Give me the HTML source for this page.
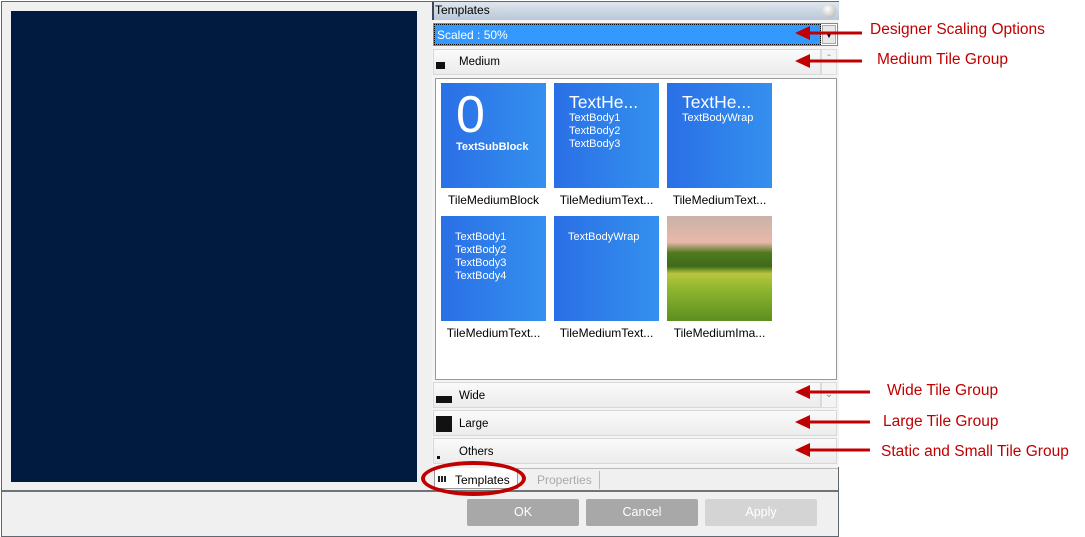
<!DOCTYPE html>
<html><head><meta charset="utf-8"><style>
*{margin:0;padding:0;box-sizing:border-box}
body{width:1085px;height:537px;background:#fff;position:relative;overflow:hidden;font-family:"Liberation Sans",sans-serif;font-size:12px;color:#000}
.a{position:absolute}
.tile{position:absolute;width:105px;height:105px;background:linear-gradient(90deg,#2a6fe6,#3490ee);color:#fff}
.lbl{position:absolute;width:113px;text-align:center;font-size:12px}
.hdr{position:absolute;left:433px;width:404px;background:linear-gradient(#fafafa,#ececec);border:1px solid #d8d8d8}
.hdr span{position:absolute;left:25px;font-size:11.5px}
.ann{position:absolute;color:#c00000;font-size:15.5px}
.btn{position:absolute;top:499px;width:112px;height:27px;background:#a8a8a8;color:#fff;text-align:center;line-height:27px;font-size:12.5px;border-radius:2px}
</style></head><body>
<div class="a" style="left:1px;top:1px;width:838px;height:536px;background:#f0f0f0;border:1px solid #606870"></div>
<div class="a" style="left:11px;top:11px;width:406px;height:471px;background:#001a40"></div>
<div class="a" style="left:2px;top:490px;width:836px;height:2px;background:#707478"></div>
<div class="a" style="left:432px;top:2px;width:407px;height:465px;background:#f4f4f4"></div>
<div class="a" style="left:432px;top:2px;width:407px;height:18px;background:linear-gradient(#dfe6ee,#b9c7d8);border-left:2px solid #445"></div>
<div class="a" style="left:435px;top:3px;font-size:12px">Templates</div>
<div class="a" style="left:822px;top:4px;width:14px;height:14px;border-radius:50%;background:radial-gradient(circle at 40% 35%,#fff,#aaa)"></div>
<div class="a" style="left:433px;top:23px;width:405px;height:23px;border:1px solid #888;background:#fff"></div>
<div class="a" style="left:434px;top:24px;width:387px;height:21px;background:#3399ff;border:1px dotted #000"></div>
<div class="a" style="left:437px;top:28px;color:#fff;font-size:12px">Scaled : 50%</div>
<div class="a" style="left:822px;top:25px;width:14px;height:19px;background:#e8e8e8;border:1px solid #aaa;font-size:8px;text-align:center;line-height:19px">▼</div>
<div class="hdr" style="top:49px;height:26px;width:388px"><span style="top:6px">Medium</span></div>
<div class="a" style="left:436px;top:62px;width:9px;height:7px;background:#111"></div>
<div class="a" style="left:821px;top:49px;width:16px;height:26px;background:#f4f4f4;border:1px solid #ddd;color:#888;font-size:10px;text-align:center;line-height:20px">ˆ</div>
<div class="a" style="left:435px;top:78px;width:402px;height:302px;background:#fff;border:1px solid #999"></div>
<div class="tile" style="left:441px;top:83px"><div class="a" style="left:15px;top:2px;font-size:52px;line-height:60px">0</div><div class="a" style="left:15px;top:58px;font-size:11px;font-weight:bold">TextSubBlock</div></div>
<div class="tile" style="left:554px;top:83px"><div class="a" style="left:15px;top:9px;font-size:17.5px">TextHe...</div><div class="a" style="left:15px;top:29px;font-size:11px;line-height:13px">TextBody1<br>TextBody2<br>TextBody3</div></div>
<div class="tile" style="left:667px;top:83px"><div class="a" style="left:15px;top:9px;font-size:17.5px">TextHe...</div><div class="a" style="left:15px;top:29px;font-size:11px">TextBodyWrap</div></div>
<div class="lbl" style="left:437px;top:193px">TileMediumBlock</div>
<div class="lbl" style="left:550px;top:193px">TileMediumText...</div>
<div class="lbl" style="left:663px;top:193px">TileMediumText...</div>
<div class="tile" style="left:441px;top:216px"><div class="a" style="left:14px;top:15px;font-size:11px;line-height:13px">TextBody1<br>TextBody2<br>TextBody3<br>TextBody4</div></div>
<div class="tile" style="left:554px;top:216px"><div class="a" style="left:14px;top:15px;font-size:11px">TextBodyWrap</div></div>
<div class="a" style="left:667px;top:216px;width:105px;height:105px;background:linear-gradient(#c9b3a8 0%,#e8b8a8 25%,#4f7a1f 35%,#3e6b1a 48%,#b8c640 55%,#8db52e 70%,#5d8f1f 100%)"></div>
<div class="lbl" style="left:437px;top:326px">TileMediumText...</div>
<div class="lbl" style="left:550px;top:326px">TileMediumText...</div>
<div class="lbl" style="left:663px;top:326px">TileMediumIma...</div>
<div class="hdr" style="top:382px;height:26px;width:388px"><span style="top:7px">Wide</span></div>
<div class="a" style="left:821px;top:382px;width:16px;height:26px;background:#f4f4f4;border:1px solid #ddd;color:#888;font-size:10px;text-align:center;line-height:24px">⌄</div>
<div class="a" style="left:436px;top:396px;width:16px;height:7px;background:#111"></div>
<div class="hdr" style="top:410px;height:26px"><span style="top:7px">Large</span></div>
<div class="a" style="left:436px;top:416px;width:16px;height:16px;background:#111"></div>
<div class="hdr" style="top:438px;height:26px"><span style="top:7px">Others</span></div>
<div class="a" style="left:437px;top:456px;width:3px;height:3px;background:#111"></div>
<div class="a" style="left:432px;top:468px;width:406px;height:1px;background:#bbb"></div>
<div class="a" style="left:434px;top:468px;width:84px;height:21px;background:#fff;border:1px solid #999;border-top:none"></div>
<div class="a" style="left:438px;top:476px;width:9px;height:6px;background:repeating-linear-gradient(90deg,#222 0 2px,transparent 2px 3px)"></div>
<div class="a" style="left:455px;top:473px;font-size:12px">Templates</div>
<div class="a" style="left:537px;top:473px;font-size:12px;color:#aaa">Properties</div>
<div class="a" style="left:599px;top:471px;width:1px;height:18px;background:#bbb"></div>
<div class="a" style="left:421px;top:461px;width:105px;height:35px;border:4px solid #c00000;border-radius:50%"></div>
<div class="btn" style="left:467px">OK</div>
<div class="btn" style="left:586px">Cancel</div>
<div class="btn" style="left:705px;background:#d4d4d4">Apply</div>
<svg class="a" style="left:790px;top:0" width="80" height="470">
<g stroke="#c00000" stroke-width="3" fill="#c00000">
<line x1="15" y1="33" x2="72" y2="33"/><polygon points="5,33 20,26 20,40" stroke="none"/>
<line x1="15" y1="61" x2="72" y2="61"/><polygon points="5,61 20,54 20,68" stroke="none"/>
<line x1="15" y1="392" x2="80" y2="392"/><polygon points="5,392 20,385 20,399" stroke="none"/>
<line x1="15" y1="422" x2="80" y2="422"/><polygon points="5,422 20,415 20,429" stroke="none"/>
<line x1="15" y1="450" x2="80" y2="450"/><polygon points="5,450 20,443 20,457" stroke="none"/>
</g></svg>
<div class="ann" style="left:870px;top:21px">Designer Scaling Options</div>
<div class="ann" style="left:877px;top:51px">Medium Tile Group</div>
<div class="ann" style="left:887px;top:382px">Wide Tile Group</div>
<div class="ann" style="left:883px;top:413px">Large Tile Group</div>
<div class="ann" style="left:881px;top:443px">Static and Small Tile Group</div>
</body></html>
